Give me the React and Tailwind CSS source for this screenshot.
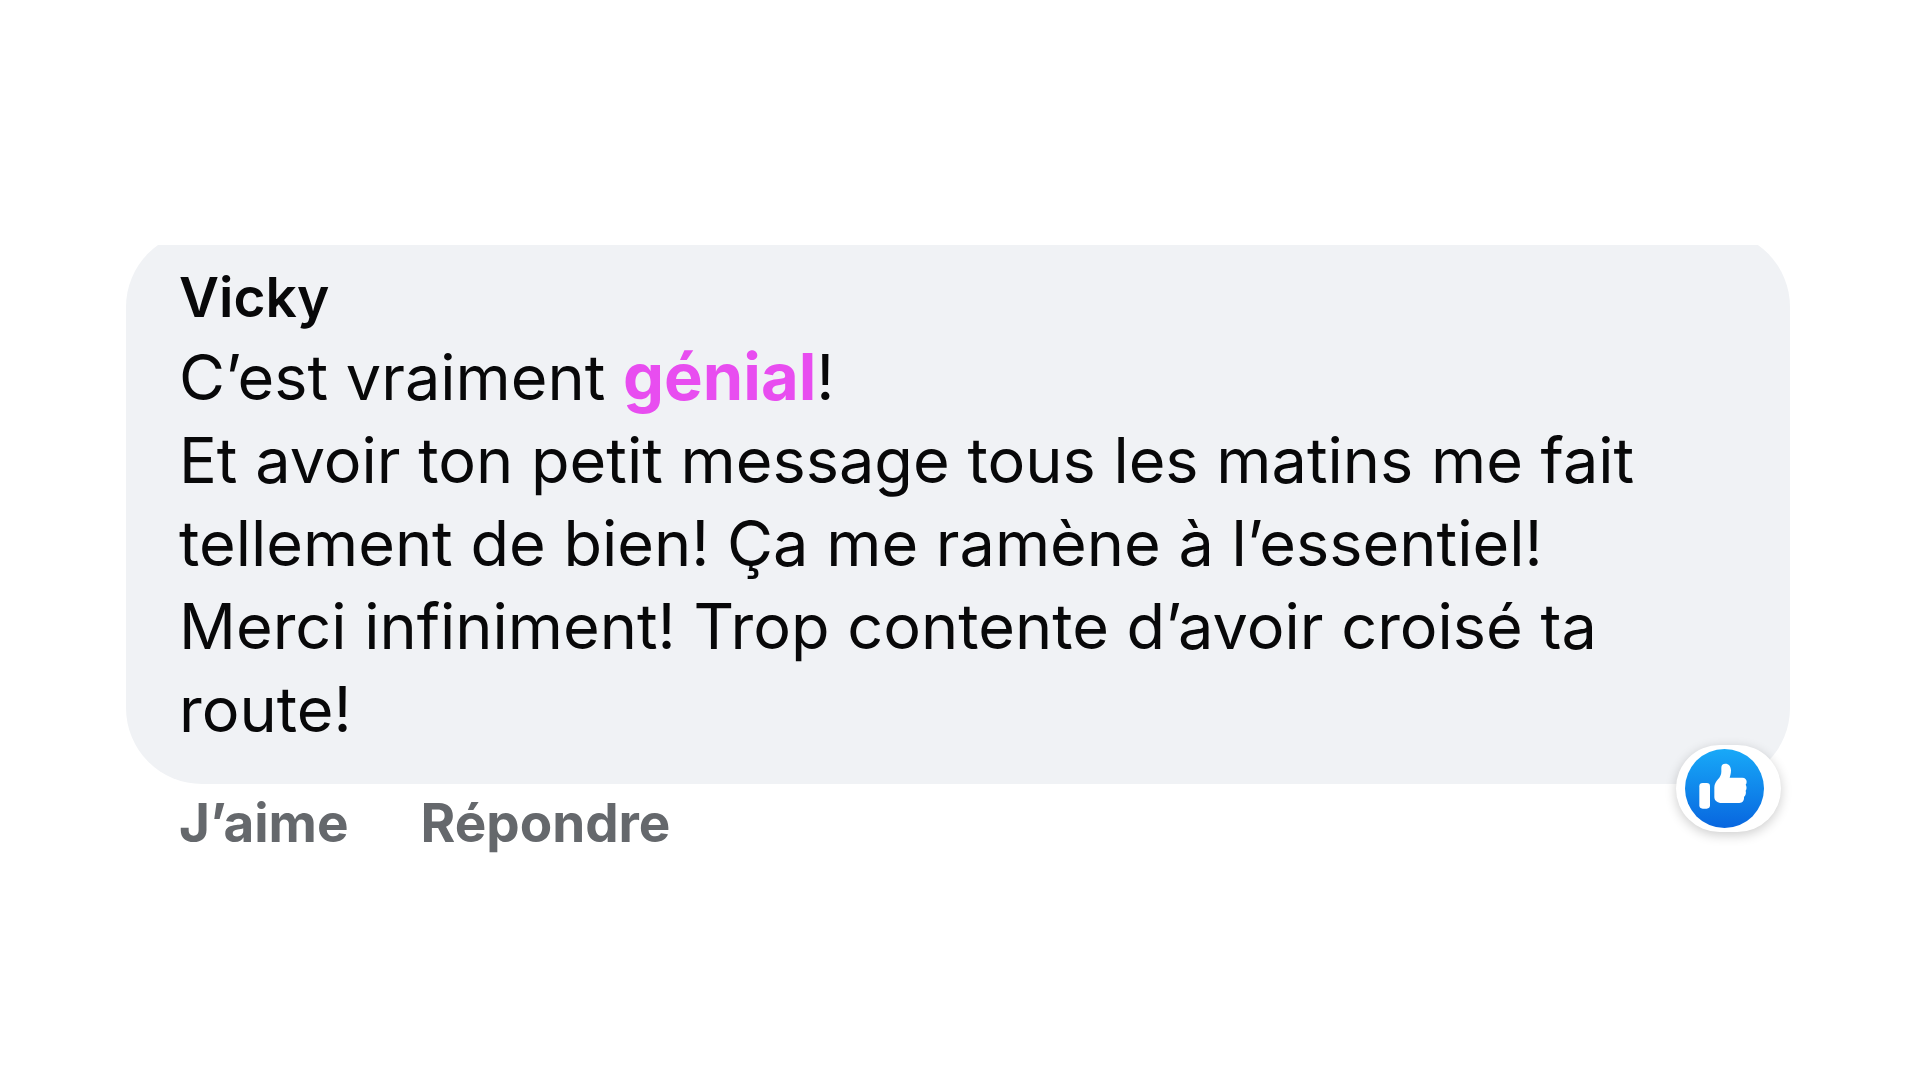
function LikeIcon() {
  return (
    <svg viewBox="0 0 237 237" className="size-[79px]" aria-hidden="true">
      <defs>
        <linearGradient id="like-blue" x1="0" y1="0" x2="0" y2="1">
          <stop offset="0" stopColor="#18a9f8" />
          <stop offset="1" stopColor="#0866df" />
        </linearGradient>
      </defs>
      <circle cx="118.5" cy="118.5" r="118.5" fill="url(#like-blue)" />
      <rect x="43" y="102" width="32" height="77" rx="10" fill="#fff" />
      <path
        fill="#fff"
        d="M121 44C131 44 138 52 138 64C138 73 136 80 134 86H172C180 86 185 91 185 98C185 102 184 105 182 107C185 111 186 120 182 125C184 132 182 140 177 144C178 153 173 162 163 162H110C97 162 88 155 88 144V115C88 105 93 98 99 91C105 84 109 77 109 68V56C109 48 113 44 121 44Z"
      />
    </svg>
  );
}

export default function App() {
  return (
    <main className="min-h-screen bg-white pt-[245px] pr-[130px] pl-[126px] font-['Inter','Liberation_Sans',sans-serif] text-[#080809]">
      <article>
        <div className="relative">
          <div className="overflow-hidden">
            <div className="-mt-3.5 rounded-[76px] bg-[#f0f2f5] px-[53px] pt-9 pb-[33px]">
              <h1 className="text-[55px] leading-[60px] font-semibold">Vicky</h1>
              <p className="mt-[9px] text-[63px] leading-[83px]">
                C’est vraiment <strong className="text-[65px] leading-none font-bold text-[#e84df0]">génial</strong>!<br />
                Et avoir ton petit message tous les matins me fait<br />
                tellement de bien! Ça me ramène à l’essentiel!<br />
                Merci infiniment! Trop contente d’avoir croisé ta<br />
                route!
              </p>
            </div>
          </div>
          <button
            aria-label="J’aime"
            className="absolute right-[9px] -bottom-12 rounded-full bg-white py-1 pr-[17px] pl-[9px] shadow-[0_3px_12px_rgba(0,0,0,0.2)]"
          >
            <LikeIcon />
          </button>
        </div>
        <footer className="flex gap-[72px] px-[53px] text-[53px] leading-[78px] font-bold text-[#65686c]">
          <button>J’aime</button>
          <button>Répondre</button>
        </footer>
      </article>
    </main>
  );
}
